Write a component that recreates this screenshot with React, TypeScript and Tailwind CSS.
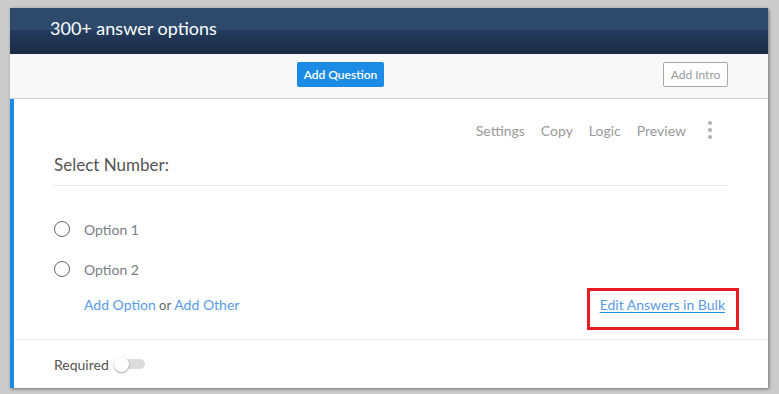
import React from "react";

export default function App() {
  const font = { fontFamily: "Lato, 'Open Sans', sans-serif" };
  return (
    <div
      className="w-[779px] h-[394px] overflow-hidden bg-[#cbcbcb] pt-[8px] pl-[10px]"
      style={font}
    >
      <div className="w-[758px] shadow-[1px_1px_3px_rgba(0,0,0,0.45)] bg-white">
        {/* Header */}
        <div className="h-[46px] pl-[40px] pt-[8px] bg-[linear-gradient(to_bottom,#2d4a6d_0%,#2d4a6d_47%,#233c5d_49%,#1a2a45_100%)]">
          <div className="text-[18px] leading-[24px] text-white">300+ answer options</div>
        </div>
        {/* Toolbar */}
        <div className="h-[45px] bg-[#f8f8f8] border-b border-[#cfcfcf] flex items-start pt-[8px] pl-[287px] pr-[40px]">
          <button className="h-[25px] w-[87px] rounded-[2px] bg-[#1b8be6] text-white text-[12px] font-semibold leading-[25px] text-center">
            Add Question
          </button>
          <button className="ml-auto h-[25px] w-[65px] rounded-[2px] bg-white border border-[#a9a9a9] text-[#9a9a9a] text-[12px] leading-[23px] text-center">
            Add Intro
          </button>
        </div>
        {/* Question */}
        <div className="border-l-4 border-[#1b8be6] bg-white pt-[20px]">
          <div className="h-[22px] flex items-center justify-end pr-[56px] text-[14px] text-[#9a9a9a] gap-[16px]">
            <span>Settings</span>
            <span>Copy</span>
            <span>Logic</span>
            <span>Preview</span>
            <span className="ml-[6px] flex flex-col gap-[3px] items-center">
              <span className="w-[4px] h-[4px] rounded-full bg-[#b0b0b0]" />
              <span className="w-[4px] h-[4px] rounded-full bg-[#b0b0b0]" />
              <span className="w-[4px] h-[4px] rounded-full bg-[#b0b0b0]" />
            </span>
          </div>
          <div className="mx-[40px] mt-[12px] pb-[8px] border-b border-[#ebebeb]">
            <div className="text-[17px] leading-[24px] text-[#555]">Select Number:</div>
          </div>
          <div className="pl-[40px] mt-[31px] flex flex-col gap-[16px]">
            {["Option 1", "Option 2"].map((o) => (
              <div key={o} className="h-[24px] flex items-center">
                <span className="w-[16px] h-[16px] rounded-full border-[1.5px] border-[#666]" />
                <span className="ml-[14px] text-[14px] text-[#7a7d85]">{o}</span>
              </div>
            ))}
          </div>
          <div className="mt-[7px] flex items-start pl-[70px] pr-[29px]">
            <div className="pt-[7px] text-[14px] leading-[20px]">
              <span className="text-[#5a9be6]">Add Option</span>
              <span className="text-[#666] text-[13px]"> or </span>
              <span className="text-[#5a9be6]">Add Other</span>
            </div>
            <div className="ml-auto border-[3px] border-[#e81c24] pl-[10px] pr-[11px] pt-[4px] pb-[12px] text-[14px] leading-[20px]">
              <span className="text-[#5a9be6] underline decoration-[#1e90e6] underline-offset-2">
                Edit Answers in Bulk
              </span>
            </div>
          </div>
          <div className="mt-[9px] border-t border-[#eeeeee] h-[49px] flex items-center pl-[40px]">
            <span className="text-[14px] text-[#555]">Required</span>
            <span className="relative ml-[5px] w-[32px] h-[15px] flex items-center">
              <span className="absolute left-[2px] w-[29px] h-[10px] rounded-full bg-[#dcdcdc]" />
              <span className="absolute left-0 w-[15px] h-[15px] rounded-full bg-white shadow-[0_1px_2px_rgba(0,0,0,0.4)]" />
            </span>
          </div>
        </div>
      </div>
    </div>
  );
}
